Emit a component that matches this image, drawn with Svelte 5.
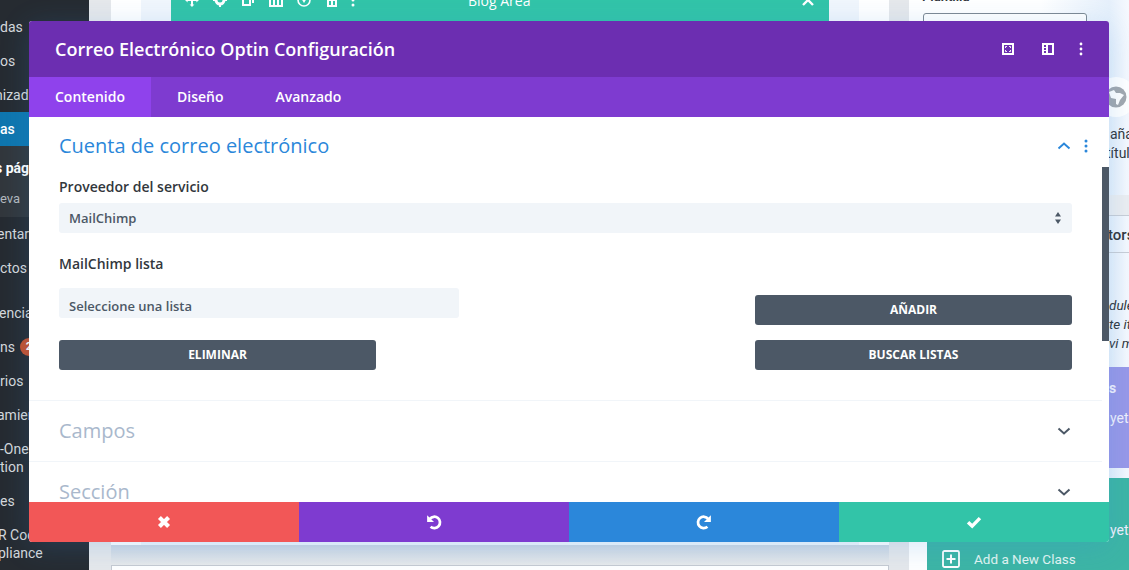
<script>
  // visible part of the wp-admin menu behind the modal, shift = how far the word runs off the left edge
  const menu = [
    { text: 'das' },
    { text: 'os' },
    { text: 'nizad', shift: 5 },
    { text: 'as', active: true },
    { text: 's pági', sub: true, strong: true, shift: 5 },
    { text: 'eva', sub: true, small: true },
    { text: 'entar', shift: 3 },
    { text: 'ctos', gap: true },
    { text: 'encia', shift: 1 },
    { text: 'ns', badge: '2' },
    { text: 'rios' },
    { text: 'amien', shift: 3 },
    { text: '-One\ntion', tall: true },
    { text: 'es' },
    { text: 'R Coc\npliance', tall: true, shift: 2 }
  ];

  const tabs = ['Contenido', 'Diseño', 'Avanzado'];
  const collapsed = ['Campos', 'Sección'];
</script>

<div class="page">
  <aside class="sidebar">
    {#each menu as item}
      <div
        class="menu-item"
        class:active={item.active}
        class:sub={item.sub}
        class:strong={item.strong}
        class:small={item.small}
        class:tall={item.tall}
        class:gap={item.gap}
      >
        <span style:margin-left={item.shift ? `-${item.shift}px` : null}>{item.text}</span>
        {#if item.badge}<b class="badge">{item.badge}</b>{/if}
      </div>
    {/each}
  </aside>

  <main class="canvas">
    <div class="builder">
      <div class="builder-inner">
        <div class="section-bar">
          <svg class="tool" viewBox="0 0 14 14"><path d="M7 0l2.4 2.6H8v3.4h3.4V4.6L14 7l-2.6 2.4V8H8v3.4h1.4L7 14l-2.4-2.6H6V8H2.6v1.4L0 7l2.6-2.4V6H6V2.6H4.6z" fill="#fff" /></svg>
          <svg class="tool" viewBox="0 0 14 14"><circle cx="7" cy="7" r="4" fill="none" stroke="#fff" stroke-width="3" /><path d="M6 0h2v3H6zM6 11h2v3H6zM0 6h3v2H0zM11 6h3v2h-3z" fill="#fff" /></svg>
          <svg class="tool" viewBox="0 0 14 14"><path d="M4 1h9v9H11V3H4z M1 4h9v9H1z M3 6v5h5V6z" fill="#fff" fill-rule="evenodd" /></svg>
          <svg class="tool" viewBox="0 0 14 14"><path d="M0 0h14v14H0z M2 3v9h2V3z M6 3v9h2V3z M10 3v9h2V3z" fill="#fff" fill-rule="evenodd" /></svg>
          <svg class="tool" viewBox="0 0 14 14"><circle cx="7" cy="7" r="6" fill="none" stroke="#fff" stroke-width="1.6" /><path d="M4 5h6L7 10z" fill="#fff" /></svg>
          <svg class="tool" viewBox="0 0 14 14"><path d="M1 2h12v2H1z M2 5h10v9H2z M4 8v4h2V8z M8 8v4h2V8z" fill="#fff" fill-rule="evenodd" /></svg>
          <svg class="tool dots" viewBox="0 0 4 14"><circle cx="2" cy="2" r="1.5" fill="#fff" /><circle cx="2" cy="7" r="1.5" fill="#fff" /><circle cx="2" cy="12" r="1.5" fill="#fff" /></svg>
          <span class="bar-title">Blog Area</span>
          <svg class="tool bar-close" viewBox="0 0 14 14"><path d="M2 2l10 10M12 2L2 12" stroke="#fff" stroke-width="2.4" /></svg>
        </div>
      </div>
    </div>
    <div class="under"></div>
    <div class="next-card"></div>
  </main>

  <aside class="panel">
    <div class="panel-label">Plantilla</div>
    <div class="panel-input"></div>
    <div class="globe-wrap">
      <svg class="globe" viewBox="0 0 22 22">
        <circle cx="11" cy="11" r="10.5" fill="#a3a8ae" />
        <path d="M4 6l5-2 2 3 4 0 4 2-4 5-2 5-2-1 0-5-5-1z" fill="#fff" />
      </svg>
    </div>
    <div class="panel-lines">
      <div>aña</div>
      <div class="cut">título</div>
    </div>
    <div class="panel-gray"></div>
    <div class="panel-heading">tors</div>
    <div class="panel-lines italic">
      <div>dule</div>
      <div>te it</div>
      <div>vi m</div>
    </div>
    <div class="block purple">
      <div class="block-title">s</div>
      <div class="block-text">yet</div>
    </div>
    <div class="block teal">
      <div class="block-text">yet</div>
      <div class="add-class">
        <svg class="add-icon" viewBox="0 0 18 18"><rect x="1" y="1" width="16" height="16" rx="1.5" fill="none" stroke="#fff" stroke-width="1.8" /><path d="M9 4.5v9M4.5 9h9" stroke="#fff" stroke-width="2" /></svg>
        <span>Add a New Class</span>
      </div>
    </div>
  </aside>

  <div class="modal">
    <header class="modal-head">
      <h1>Correo Electrónico Optin Configuración</h1>
      <div class="head-icons">
        <svg class="head-icon" viewBox="0 0 12 12"><path d="M0 0h12v12H0z M2 2v8h8V2z" fill="#fff" fill-rule="evenodd" /><path d="M3.5 5V3.5H5M7 3.5h1.5V5M8.5 7v1.5H7M5 8.5H3.5V7" fill="none" stroke="#fff" stroke-width="0.9" /></svg>
        <svg class="head-icon" viewBox="0 0 12 12"><path d="M0 0h12v12H0z M2 2v2h2V2z M2 5v2h2V5z M2 8v2h2V8z M6 2v8h4V2z" fill="#fff" fill-rule="evenodd" /></svg>
        <svg class="head-dots" viewBox="0 0 4 14"><circle cx="2" cy="2" r="1.4" fill="#fff" /><circle cx="2" cy="7" r="1.4" fill="#fff" /><circle cx="2" cy="12" r="1.4" fill="#fff" /></svg>
      </div>
    </header>

    <nav class="tabs">
      {#each tabs as tab, i}
        <span class="tab" class:on={i === 0}>{tab}</span>
      {/each}
    </nav>

    <div class="body">
      <section class="group">
        <div class="group-head open">
          <h2>Cuenta de correo electrónico</h2>
          <svg class="chevron" viewBox="0 0 14 8"><path d="M1.5 6.5L7 1.5l5.5 5" fill="none" stroke="#2b87da" stroke-width="2" /></svg>
          <svg class="group-dots" viewBox="0 0 4 14"><circle cx="2" cy="2" r="1.5" fill="#2b87da" /><circle cx="2" cy="7" r="1.5" fill="#2b87da" /><circle cx="2" cy="12" r="1.5" fill="#2b87da" /></svg>
        </div>

        <div class="field-label first">Proveedor del servicio</div>
        <div class="select">
          <span>MailChimp</span>
          <svg class="updown" viewBox="0 0 8 12"><path d="M4 0l3 4.6H1zM4 12L1 7.4h6z" fill="#4c5866" /></svg>
        </div>

        <div class="field-label second">MailChimp lista</div>
        <div class="list-grid">
          <div class="select narrow"><span>Seleccione una lista</span></div>
          <button class="btn add">AÑADIR</button>
          <button class="btn">ELIMINAR</button>
          <button class="btn">BUSCAR LISTAS</button>
        </div>
      </section>

      {#each collapsed as name}
        <section class="group closed">
          <div class="group-head">
            <h2>{name}</h2>
            <svg class="chevron" viewBox="0 0 14 8"><path d="M1.5 1.5L7 6.5l5.5-5" fill="none" stroke="#4c5866" stroke-width="2" /></svg>
          </div>
        </section>
      {/each}

      <div class="scroll-thumb"></div>
    </div>

    <footer class="actions">
      <button class="action red" aria-label="Cancelar">
        <svg viewBox="0 0 14 14"><path d="M3 3l8 8M11 3l-8 8" stroke="#fff" stroke-width="3.6" /></svg>
      </button>
      <button class="action violet" aria-label="Deshacer">
        <svg viewBox="0 0 14 14"><path d="M3.4 4.2A5 5 0 1 1 4 11.2" fill="none" stroke="#fff" stroke-width="2.4" /><path d="M1 1v6h6z" fill="#fff" /></svg>
      </button>
      <button class="action blue" aria-label="Rehacer">
        <svg viewBox="0 0 14 14"><path d="M10.6 4.2A5 5 0 1 0 10 11.2" fill="none" stroke="#fff" stroke-width="2.4" /><path d="M13 1v6H7z" fill="#fff" /></svg>
      </button>
      <button class="action green" aria-label="Guardar">
        <svg viewBox="0 0 14 14"><path d="M1.8 7.2l3.6 3.4 6.8-7" fill="none" stroke="#fff" stroke-width="3" /></svg>
      </button>
    </footer>
  </div>
</div>

<style>
  :global(body) {
    margin: 0;
    overflow: hidden;
  }

  .page {
    position: relative;
    display: flex;
    width: 1129px;
    height: 570px;
    overflow: hidden;
    font-family: "Open Sans", "Liberation Sans", sans-serif;
  }

  /* admin menu */
  .sidebar {
    width: 89px;
    flex: none;
    padding-top: 10px;
    box-sizing: border-box;
    background: #262b31;
    color: #d5d8db;
    font-family: Roboto, "Liberation Sans", sans-serif;
    font-size: 14px;
  }

  .menu-item {
    display: flex;
    align-items: center;
    height: 34px;
    box-sizing: border-box;
    white-space: pre-line;
    line-height: 18px;
    overflow: hidden;
  }

  .menu-item.active {
    background: #0f76ae;
    color: #fff;
    font-weight: 500;
  }

  .menu-item.sub {
    background: #32373c;
    height: 35.5px;
  }

  .menu-item.strong {
    color: #fff;
    font-weight: 700;
    padding-top: 8px;
  }

  .menu-item.small {
    font-size: 13px;
    color: #b4b9be;
  }

  .menu-item.gap {
    margin-bottom: 11px;
  }

  .menu-item.tall {
    height: 52px;
  }

  .badge {
    flex: none;
    width: 18px;
    height: 18px;
    margin-left: 5px;
    border-radius: 50%;
    background: #c4502d;
    color: #fff;
    font-size: 11px;
    text-align: center;
  }

  /* builder behind the modal */
  .canvas {
    flex: 1;
    padding: 0 20px 0 22px;
    background: #e6e8eb;
  }

  .builder {
    height: 545px;
    padding: 0 30px;
    background: #fff;
    box-sizing: border-box;
  }

  .builder-inner {
    height: 100%;
    padding: 0 30px;
    background: #f1f6fc;
  }

  .section-bar {
    display: flex;
    position: relative;
    align-items: flex-end;
    gap: 14px;
    height: 21px;
    padding: 0 0 14px 14px;
    box-sizing: border-box;
    background: #32c4a8;
    color: #fff;
    font-size: 14px;
  }

  .tool {
    width: 14px;
    height: 14px;
    flex: none;
  }

  .tool.dots {
    width: 4px;
    margin-left: -2px;
  }

  .bar-title {
    position: absolute;
    left: 297px;
    bottom: 11px;
    line-height: 18px;
  }

  .bar-close {
    position: absolute;
    right: 14px;
    bottom: 14px;
  }

  .under {
    height: 20px;
    background: linear-gradient(180deg, #cdd7e3, #e7e9eb);
  }

  .next-card {
    height: 30px;
    border: 1px solid #c6cad2;
    background: #fff;
  }

  /* right settings panel */
  .panel {
    width: 220px;
    flex: none;
    height: 570px;
    overflow: hidden;
    background: linear-gradient(90deg, #fff, #fff 60%, #e6f0fb 91%, #f6f9fe);
    color: #32373c;
    font-family: Roboto, "Liberation Sans", sans-serif;
    font-size: 14px;
  }

  .panel-label {
    margin: -11px 0 0 13px;
    line-height: 16px;
    font-size: 13px;
    font-weight: 600;
  }

  .panel-input {
    width: 162px;
    height: 40px;
    margin: 8px 0 0 14px;
    border: 1px solid #7e8993;
    border-radius: 3px;
    background: #fff;
  }

  .globe-wrap {
    display: flex;
    align-items: center;
    justify-content: center;
    width: 40px;
    height: 40px;
    margin: 22px 0 0 187px;
    border-radius: 50%;
    background: #fff;
  }

  .globe {
    width: 22px;
    height: 22px;
  }

  .panel-lines {
    margin-top: 8px;
    padding-left: 201px;
    line-height: 19px;
    white-space: nowrap;
  }

  .cut {
    margin-left: -4px;
  }

  .panel-gray {
    height: 20px;
    margin-top: 32px;
    border-bottom: 1px solid #c9ced6;
    background: #eceef1;
  }

  .panel-heading {
    height: 36px;
    padding-left: 199px;
    border-bottom: 1px solid #c9ced6;
    line-height: 38px;
    font-size: 15px;
    font-weight: 500;
  }

  .panel-lines.italic {
    margin-top: 43px;
    margin-bottom: 1px;
    padding-left: 200px;
    font-size: 13.5px;
    font-style: italic;
  }

  .block {
    margin-left: 18px;
    color: #f0f0fc;
  }

  .block.purple {
    height: 101px;
    margin-top: 14px;
    background: #9898e8;
  }

  .block.teal {
    height: 92px;
    margin-top: 10px;
    background: #3db5a5;
  }

  .block-title {
    padding: 12px 0 0 182px;
    line-height: 18px;
    font-weight: 700;
  }

  .block-text {
    padding: 11px 0 0 183px;
    line-height: 20px;
    white-space: nowrap;
  }

  .block.teal .block-text {
    padding-top: 42px;
  }

  .add-class {
    display: flex;
    align-items: center;
    gap: 14px;
    margin-top: 10px;
    padding: 0 0 0 15px;
    color: #e3f5f2;
    font-size: 13.5px;
  }

  .add-icon {
    width: 18px;
    height: 18px;
    flex: none;
  }

  /* settings modal, sits over everything */
  .modal {
    position: absolute;
    left: 29px;
    top: 21px;
    display: flex;
    flex-direction: column;
    width: 1080px;
    height: 521px;
    border-radius: 3px;
    overflow: hidden;
    background: #fff;
    box-shadow: 0 5px 30px rgba(43, 135, 218, 0.2);
  }

  .modal-head {
    display: flex;
    align-items: center;
    justify-content: space-between;
    flex: none;
    height: 56px;
    padding: 0 26px;
    background: #6c2eb1;
  }

  h1 {
    margin: 0 0 1px;
    color: #fff;
    font-size: 18px;
    font-weight: 600;
  }

  .head-icons {
    display: flex;
    align-items: center;
    gap: 28px;
  }

  .head-icon {
    width: 12px;
    height: 12px;
  }

  .head-dots {
    width: 4px;
    height: 14px;
    margin-left: -3px;
  }

  .tabs {
    display: flex;
    flex: none;
    height: 40px;
    background: #7e3bd0;
  }

  .tab {
    padding: 0 26px;
    color: #fff;
    font-size: 14px;
    font-weight: 600;
    line-height: 40px;
  }

  .tab.on {
    background: #8f42ec;
  }

  .body {
    position: relative;
    flex: 1;
    overflow: hidden;
  }

  .group {
    margin-right: 7px;
    padding: 0 30px;
    border-bottom: 1px solid #f1f5f9;
  }

  .group.closed {
    height: 60px;
  }

  .group-head {
    display: flex;
    align-items: center;
    height: 60px;
  }

  .group-head.open {
    height: 58px;
    margin-right: -16px;
  }

  h2 {
    flex: 1;
    margin: 0 0 2px;
    color: #a9b8cc;
    font-size: 20px;
    font-weight: 400;
  }

  .open h2 {
    color: #2b87da;
  }

  .chevron {
    width: 14px;
    height: 8px;
    flex: none;
    margin-right: 1px;
  }

  .group-dots {
    width: 4px;
    height: 14px;
    margin-left: 12px;
  }

  .field-label {
    color: #32373c;
    font-size: 14px;
    font-weight: 600;
    line-height: 18px;
  }

  .field-label.first {
    margin-top: 3px;
    margin-bottom: 7px;
  }

  .field-label.second {
    margin-top: 22px;
    margin-bottom: 15px;
  }

  .select {
    display: flex;
    align-items: center;
    justify-content: space-between;
    height: 30px;
    padding: 0 10px;
    border-radius: 3px;
    box-sizing: border-box;
    background: #f1f5f9;
    color: #4c5866;
    font-size: 13px;
    font-weight: 600;
  }

  .select.narrow {
    align-items: flex-end;
    padding-bottom: 3px;
    line-height: 18px;
  }

  .updown {
    width: 8px;
    height: 12px;
  }

  .list-grid {
    display: grid;
    grid-template-columns: 400px 317px;
    justify-content: space-between;
    row-gap: 15px;
    padding-bottom: 30px;
  }

  .btn {
    width: 317px;
    height: 30px;
    padding: 0 0 2px;
    border: 0;
    border-radius: 3px;
    background: #4c5866;
    color: #fff;
    font-family: inherit;
    font-size: 12px;
    font-weight: 700;
  }

  .btn.add {
    margin-top: 7px;
  }

  .scroll-thumb {
    position: absolute;
    right: 0;
    top: 50px;
    width: 7px;
    height: 174px;
    background: #4c5866;
  }

  .actions {
    display: grid;
    grid-template-columns: repeat(4, 1fr);
    flex: none;
    height: 40px;
  }

  .action {
    display: flex;
    align-items: center;
    justify-content: center;
    padding: 0;
    border: 0;
  }

  .action svg {
    width: 16px;
    height: 16px;
  }

  .red { background: #f25757; }
  .violet { background: #7e3bd0; }
  .blue { background: #2b87da; }
  .green { background: #32c4a8; }
</style>
